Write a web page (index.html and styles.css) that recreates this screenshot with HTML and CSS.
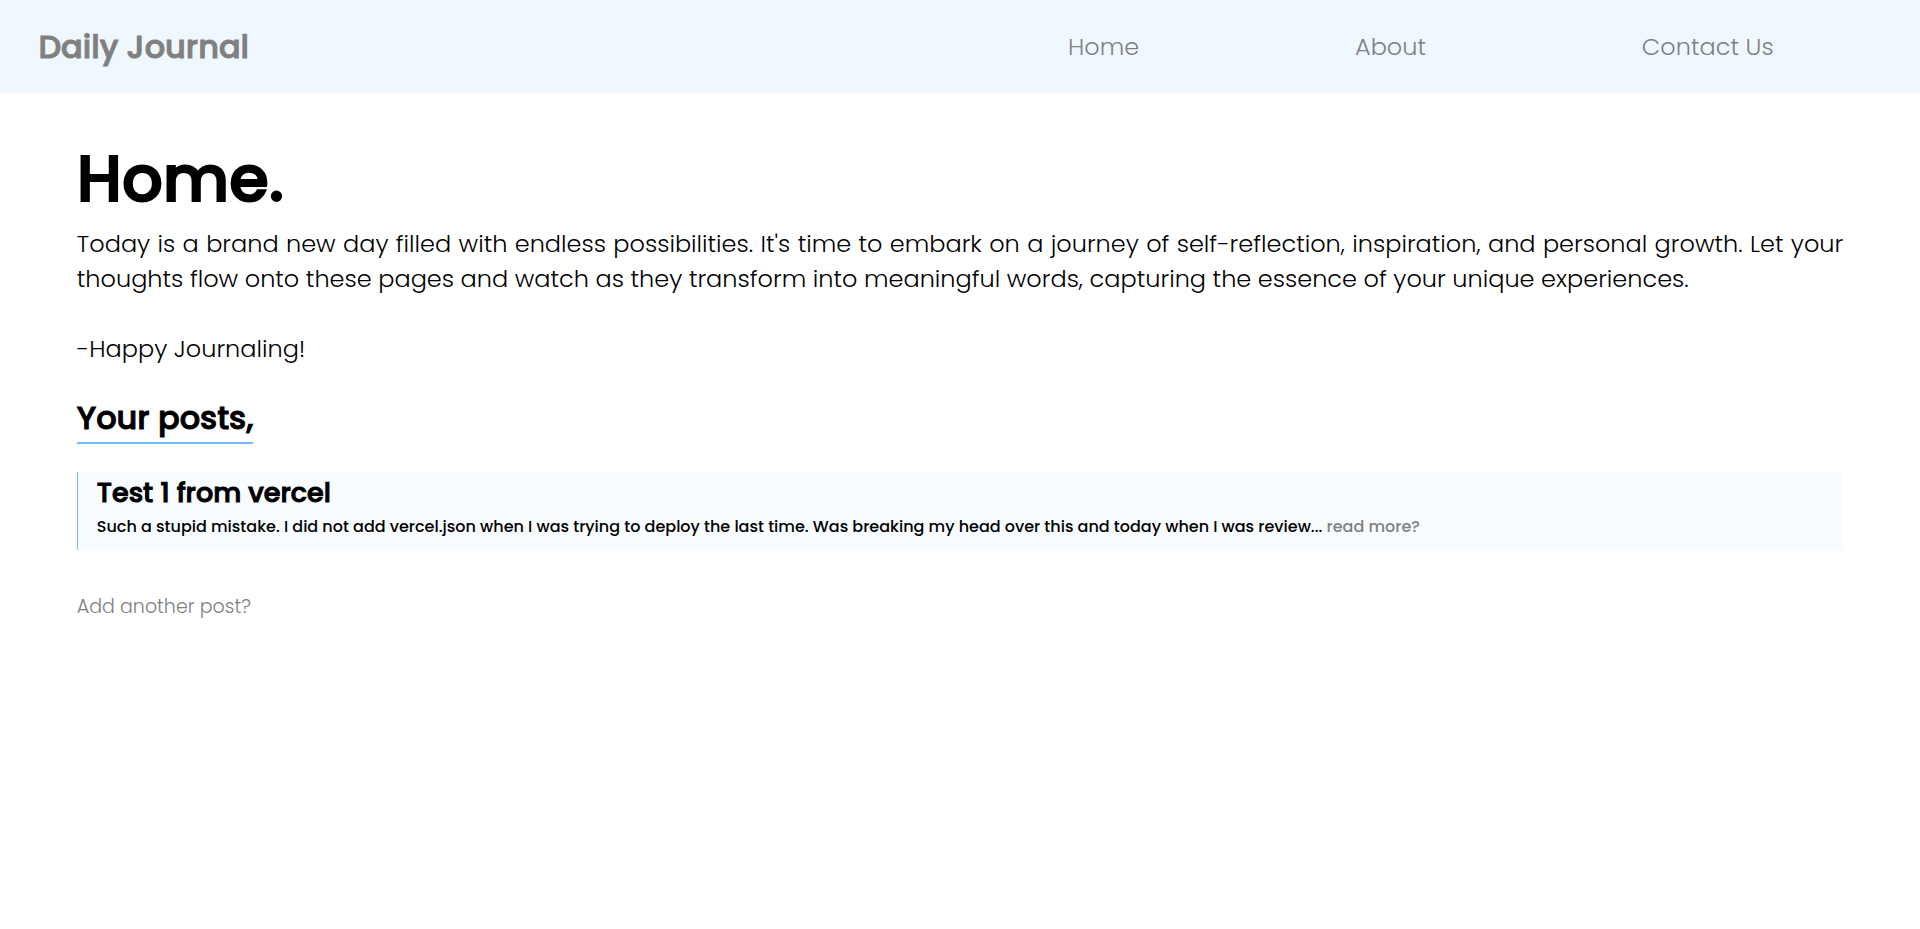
FILE: index.html
```html
<!DOCTYPE html>
<html lang="en">
<head>
  <meta charset="utf-8">
  <meta name="viewport" content="width=device-width, initial-scale=1">
  <title>Daily Journal</title>
  <link rel="stylesheet" href="styles.css">
</head>
<body>
  <header class="site-header">
    <a class="brand" href="#">Daily Journal</a>
    <nav class="site-nav">
      <a class="nav-link" href="#">Home</a>
      <a class="nav-link" href="#">About</a>
      <a class="nav-link" href="#">Contact Us</a>
    </nav>
  </header>
  <main class="content">
    <h1 class="page-title">Home.</h1>
    <p class="intro">Today is a brand new day filled with endless possibilities. It's time to embark on a journey of self-reflection, inspiration, and personal growth. Let your thoughts flow onto these pages and watch as they transform into meaningful words, capturing the essence of your unique experiences.</p>
    <p class="intro sign-off">-Happy Journaling!</p>
    <h2 class="posts-title">Your posts,</h2>
    <article class="post">
      <h3 class="post-title">Test 1 from vercel</h3>
      <p class="post-text">Such a stupid mistake. I did not add vercel.json when I was trying to deploy the last time. Was breaking my head over this and today when I was review... <a class="post-more" href="#">read more?</a></p>
    </article>
    <a class="add-post" href="#">Add another post?</a>
  </main>
</body>
</html>
```

FILE: styles.css
```css
* {
  box-sizing: border-box;
  margin: 0;
  padding: 0;
}

body {
  font-family: Poppins, Inter, "Open Sans", sans-serif;
  color: #000;
  background: #fff;
}

a {
  color: gray;
  text-decoration: none;
}

.brand,
.page-title,
.posts-title,
.post-title {
  font-weight: 500;
  -webkit-text-stroke: 1px currentColor;
}

.site-header {
  display: flex;
  align-items: center;
  justify-content: space-between;
  padding: 22px 2%;
  background: #f0f8ff;
}

.brand {
  font-size: 32px;
  line-height: 49px;
}

.site-nav {
  display: flex;
  justify-content: space-around;
  width: 50%;
}

.nav-link {
  font-size: 24px;
  line-height: 36px;
  font-weight: 300;
}

.content {
  display: flex;
  flex-direction: column;
  align-items: flex-start;
  padding: 40px 4%;
}

.page-title {
  margin-bottom: 2px;
  font-size: 64px;
  line-height: 91px;
  -webkit-text-stroke-width: 2px;
}

.intro {
  font-size: 24px;
  line-height: 35px;
  font-weight: 300;
  text-align: justify;
}

.sign-off {
  margin-top: 35px;
}

.posts-title {
  margin-top: 28px;
  border-bottom: 2px solid #73b9ff;
  font-size: 32px;
  line-height: 48px;
}

.post {
  align-self: stretch;
  margin-top: 28px;
  padding: 0 19px 11px;
  border-left: 1px solid #73b9ff;
  background: #f8fcff;
}

.post-title {
  margin-bottom: 1px;
  font-size: 27px;
  line-height: 42px;
}

.post-text {
  font-size: 16px;
  line-height: 24px;
  font-weight: 500;
}

.add-post {
  margin-top: 43px;
  font-size: 19px;
  line-height: 28px;
  font-weight: 300;
}
```
